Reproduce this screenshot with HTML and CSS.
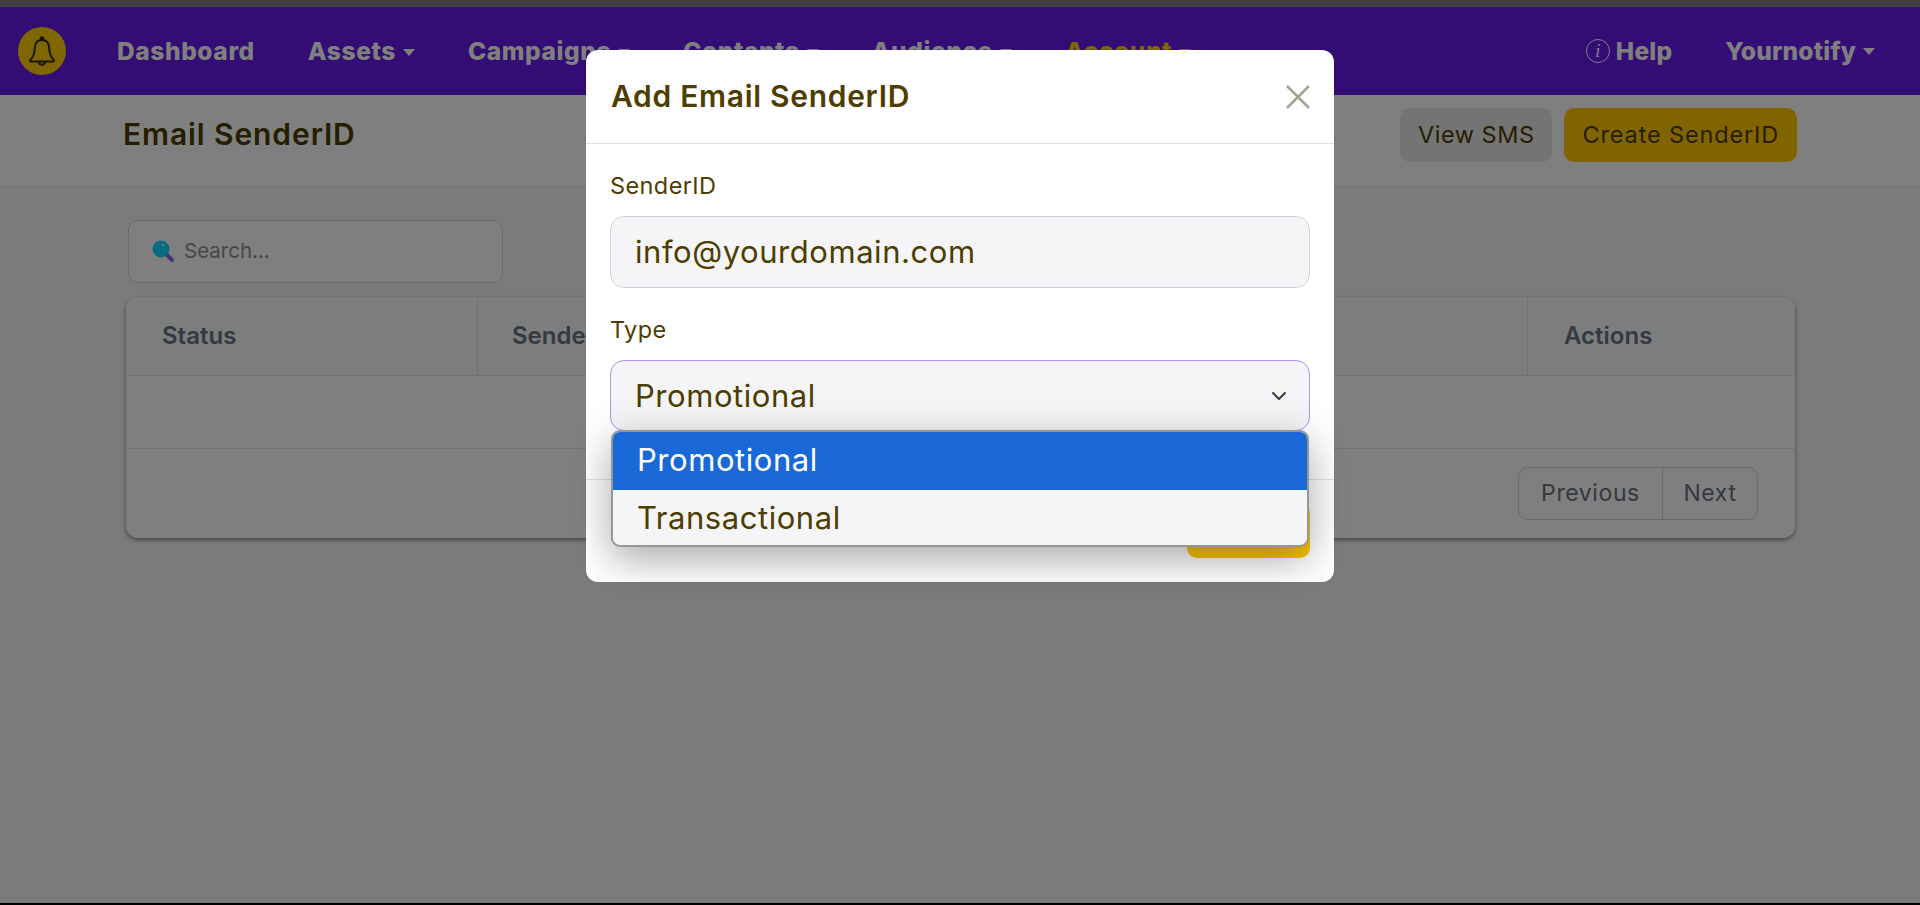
FILE: index.html
```html
<!DOCTYPE html>
<html lang="en">

<head>
    <meta charset="UTF-8">
    <meta name="viewport" content="width=device-width, initial-scale=1.0">
    <title>Email SenderID</title>
    <link rel="stylesheet" href="styles.css">
</head>

<body>
    <div class="top-strip"></div>

    <nav class="navbar">
        <div class="logo">
            <svg width="28" height="30" viewBox="0 0 28 30" fill="none" stroke="#33280a" stroke-width="2" stroke-linejoin="round">
                <circle cx="14" cy="2.6" r="1.4" />
                <path d="M14 4C9 4 7 7.5 6.8 12C6.6 17 6 20.5 2.6 23.4C1.6 24.4 2 25.4 3.4 25.4H24.6C26 25.4 26.4 24.4 25.4 23.4C22 20.5 21.4 17 21.2 12C21 7.5 19 4 14 4Z" />
                <path d="M10.8 25.6C11 27.6 12.4 28.8 14 28.8C15.6 28.8 17 27.6 17.2 25.6" />
            </svg>
        </div>
        <ul class="nav-links">
            <li>Dashboard</li>
            <li class="caret">Assets</li>
            <li class="caret">Campaigns</li>
            <li class="caret">Contents</li>
            <li class="caret">Audience</li>
            <li class="caret active">Account</li>
        </ul>
        <div class="nav-right">
            <div class="help"><span class="help-icon">i</span>Help</div>
            <div class="caret account-menu">Yournotify</div>
        </div>
    </nav>

    <header class="page-header">
        <h1>Email SenderID</h1>
        <div class="page-actions">
            <a class="btn btn-grey">View SMS</a>
            <a class="btn btn-yellow">Create SenderID</a>
        </div>
    </header>

    <main class="content">
        <div class="search">
            <svg width="22" height="22" viewBox="0 0 22 22">
                <path d="M14 14L20 20" stroke="#8a6ac8" stroke-width="4" stroke-linecap="round" />
                <circle cx="9" cy="9" r="8.5" fill="#14d4ff" />
                <circle cx="11" cy="5" r="1.4" fill="#bdeeff" />
            </svg>
            <span>Search...</span>
        </div>

        <div class="card">
            <div class="table-head">
                <div class="col-status">Status</div>
                <div class="col-sender">SenderID</div>
                <div class="col-actions">Actions</div>
            </div>
            <div class="table-row"></div>
            <div class="table-foot">
                <div class="pager">
                    <a class="pager-prev">Previous</a>
                    <a class="pager-next">Next</a>
                </div>
            </div>
        </div>
    </main>

    <div class="backdrop">
        <div class="modal">
            <div class="modal-header">
                <h2>Add Email SenderID</h2>
                <svg class="close" width="24" height="24" viewBox="0 0 24 24" stroke="#a6a392" stroke-width="2.6">
                    <path d="M1 1L23 23M23 1L1 23" />
                </svg>
            </div>
            <div class="modal-body">
                <label>SenderID</label>
                <div class="field">info@yourdomain.com</div>
                <label>Type</label>
                <div class="select">
                    <span>Promotional</span>
                    <svg width="16" height="16" viewBox="0 0 16 16" fill="none" stroke="#343a40" stroke-width="2" stroke-linecap="round" stroke-linejoin="round">
                        <path d="M2 5L8 11L14 5" />
                    </svg>
                    <ul class="dropdown">
                        <li class="selected">Promotional</li>
                        <li>Transactional</li>
                    </ul>
                </div>
            </div>
            <div class="modal-footer">
                <a class="btn btn-save">Save</a>
            </div>
        </div>
    </div>

    <div class="bottom-line"></div>
</body>

</html>
```

FILE: styles.css
```css
* {
    box-sizing: border-box;
}

body {
    margin: 0;
    height: 905px;
    overflow: hidden;
    font-family: Inter, 'Noto Sans', sans-serif;
    background-color: #f7f7f7;
    color: #4d3d00;
}

ul {
    list-style: none;
    margin: 0;
    padding: 0;
}

.top-strip {
    height: 7px;
    background-color: #808080;
    border-top: 5px solid #7c7c7c;
}

/* Navbar */
.navbar {
    display: flex;
    align-items: center;
    height: 88px;
    padding: 0 18px;
    background-color: #661ae8;
    color: #fff;
    font-size: 24.5px;
    font-weight: 800;
    letter-spacing: 0.6px;
}

.logo {
    display: flex;
    align-items: center;
    justify-content: center;
    width: 48px;
    height: 48px;
    border-radius: 50%;
    background-color: #ffcc00;
}

.nav-links {
    display: flex;
    gap: 53px;
    margin-left: 51px;
}

.caret::after {
    content: "";
    display: inline-block;
    margin-left: 7px;
    vertical-align: 4px;
    border-top: 7px solid currentColor;
    border-left: 6.5px solid transparent;
    border-right: 6.5px solid transparent;
}

.active {
    color: #ffcc00;
}

.nav-right {
    display: flex;
    align-items: center;
    margin-left: auto;
    letter-spacing: 0.2px;
}

.help {
    display: flex;
    align-items: center;
    gap: 6px;
    margin-right: 25px;
}

.help-icon {
    display: flex;
    align-items: center;
    justify-content: center;
    width: 24px;
    height: 24px;
    border: 1.5px solid #fff;
    border-radius: 50%;
    font-family: 'Liberation Serif', serif;
    font-size: 18px;
    font-style: italic;
    font-weight: 400;
}

.account-menu {
    display: flex;
    align-items: center;
    height: 60px;
    padding: 0 27px 0 28px;
    background-color: #681cec;
}

/* Page header */
.page-header {
    display: flex;
    justify-content: space-between;
    height: 92px;
    padding: 13px 123px 0 123px;
    background-color: #fff;
    border-bottom: 1px solid #eaeaea;
}

.page-header h1 {
    margin: 0;
    font-size: 30px;
    font-weight: 600;
    letter-spacing: 0.9px;
    line-height: 53px;
}

.page-actions {
    display: flex;
    gap: 12px;
}

.btn {
    display: flex;
    align-items: center;
    justify-content: center;
    height: 54px;
    padding: 0 18px 2px;
    border-radius: 10px;
    font-size: 23.5px;
    font-weight: 400;
    letter-spacing: 0.85px;
}

.btn-grey {
    background-color: #e8e8e8;
    letter-spacing: 0.5px;
}

.btn-yellow {
    background-color: #ffc800;
}

/* Search and table */
.content {
    padding: 33px 125px 0 126px;
}

.search {
    display: flex;
    align-items: center;
    gap: 10px;
    width: 375px;
    height: 63px;
    margin-left: 2px;
    padding: 0 0 2px 23px;
    border: 1px solid #d6d6d6;
    border-radius: 10px;
    background-color: #fff;
    color: #8f8f8f;
    font-size: 20.5px;
}

.card {
    margin-top: 14px;
    border-radius: 12px;
    background-color: #fff;
    box-shadow: 0 2px 4px rgba(0, 0, 0, 0.45);
    color: #6b7280;
}

.table-head {
    display: flex;
    height: 79px;
    border-bottom: 1px solid #e5e7eb;
    border-radius: 12px 12px 0 0;
    background-color: #f9fbfa;
    font-size: 24px;
    font-weight: 600;
    line-height: 78px;
}

.col-status {
    width: 351px;
    padding-left: 36px;
}

.col-sender {
    flex: 1;
    padding-left: 34px;
    border-left: 1px solid #e5e7eb;
}

.col-actions {
    width: 268px;
    padding-left: 36px;
    border-left: 1px solid #e5e7eb;
}

.table-row {
    height: 73px;
    border-bottom: 1px solid #e5e7eb;
}

.table-foot {
    display: flex;
    justify-content: flex-end;
    height: 89px;
    padding: 18px 37px 0 0;
}

.pager {
    display: flex;
    height: 53px;
    border: 1px solid #d1d5db;
    border-radius: 10px;
    font-size: 23px;
    letter-spacing: 0.6px;
    line-height: 51px;
}

.pager-prev {
    width: 143px;
    text-align: center;
}

.pager-next {
    width: 95px;
    text-align: center;
    border-left: 1px solid #d1d5db;
}

/* Modal */
.backdrop {
    position: fixed;
    inset: 0;
    display: flex;
    justify-content: center;
    background-color: rgba(0, 0, 0, 0.5);
}

.modal {
    width: 748px;
    height: 532px;
    margin-top: 50px;
    border-radius: 12px;
    background-color: #fff;
}

.modal-header {
    display: flex;
    align-items: center;
    justify-content: space-between;
    height: 94px;
    padding: 0 24px 0 25px;
    border-bottom: 1px solid #e2e2e6;
}

.modal-header h2 {
    margin: 0 0 2px;
    font-size: 30px;
    font-weight: 600;
    letter-spacing: 0.7px;
}

.modal-body {
    height: 335px;
    padding: 23px 24px 0;
}

.modal-body label {
    display: block;
    margin-bottom: 11px;
    font-size: 23.5px;
    letter-spacing: 0.4px;
    line-height: 38px;
}

.field,
.select {
    display: flex;
    align-items: center;
    border-radius: 14px;
    background-color: #f5f5f8;
    font-size: 31px;
    letter-spacing: 0.55px;
}

.field {
    height: 72px;
    margin-bottom: 23px;
    padding: 0 0 2px 24px;
    border: 1px solid #ced4da;
}

.select {
    position: relative;
    justify-content: space-between;
    height: 71px;
    padding: 0 22px 0 24px;
    border: 1px solid #b48dff;
}

.dropdown {
    position: absolute;
    top: 100%;
    left: 0;
    right: 0;
    overflow: hidden;
    border: 2px solid #969696;
    border-radius: 9px;
    background-color: #f5f5f8;
    box-shadow: 0 12px 40px rgba(0, 0, 0, 0.35);
}

.dropdown li {
    height: 55px;
    padding-left: 24px;
    line-height: 55px;
}

.dropdown .selected {
    height: 58px;
    background-color: #1a68d6;
    color: #fff;
}

.modal-footer {
    display: flex;
    justify-content: flex-end;
    padding: 24px 24px 0;
    border-top: 1px solid #e2e2e6;
}

.btn-save {
    width: 123px;
    background-color: #ffc800;
}

.bottom-line {
    position: fixed;
    left: 0;
    right: 0;
    bottom: 0;
    height: 2px;
    background-color: #000;
}
```
